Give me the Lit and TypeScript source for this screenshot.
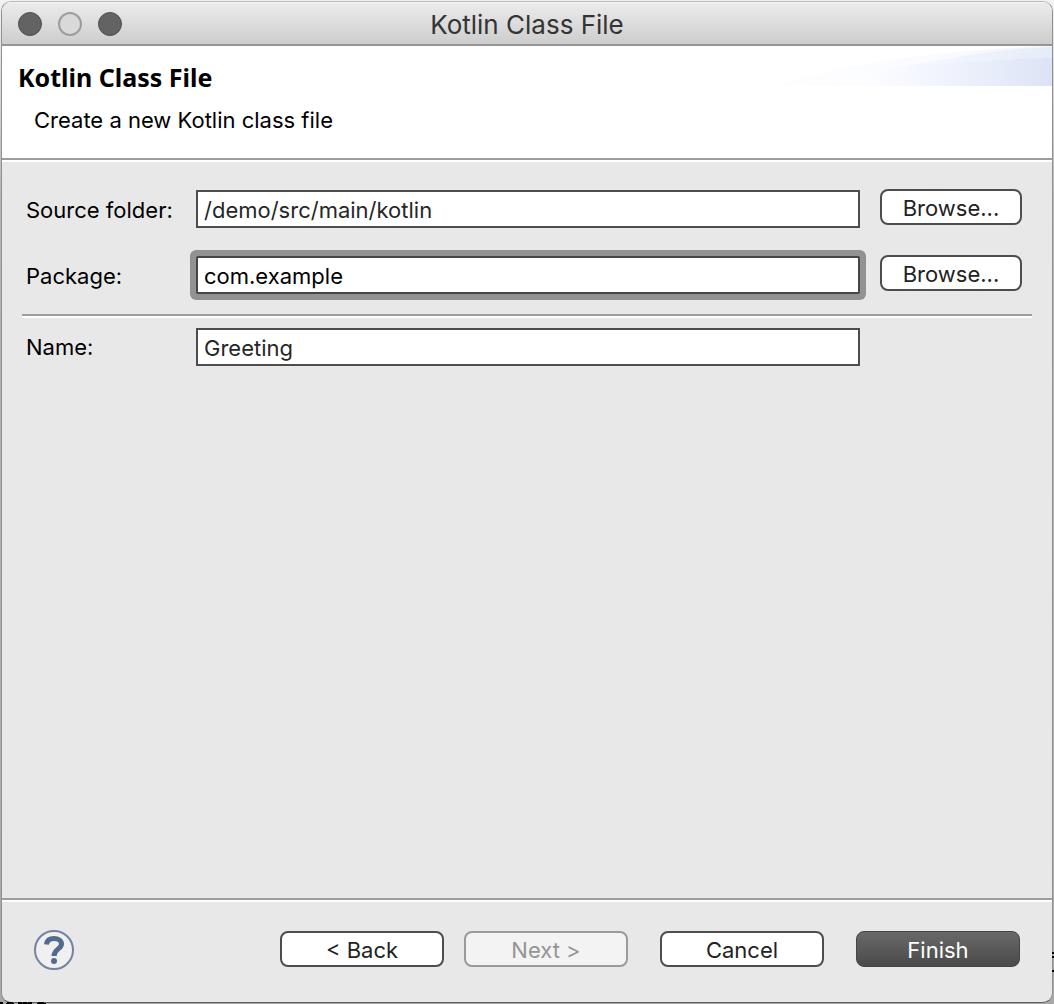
import { LitElement, html, css, svg } from "lit";
import { customElement, state } from "lit/decorators.js";

@customElement("app-root")
export class AppRoot extends LitElement {
  static styles = css`
    :host {
      display: block;
      font-family: Inter, "Liberation Sans", sans-serif;
      font-size: 22px;
      line-height: 28px;
      color: #000;
    }
    * {
      box-sizing: border-box;
    }
    .desktop {
      position: relative;
      display: flex;
      min-height: 100vh;
      padding: 1px;
      background: linear-gradient(#f2f2f2, #b4b4b4 20%, #a8a8a8);
      overflow: hidden;
    }
    .behind {
      position: absolute;
      left: 0;
      bottom: 0;
      width: 48px;
      height: 2px;
    }
    .edge {
      position: absolute;
      right: 0;
      bottom: 32px;
      width: 2px;
      height: 20px;
    }
    .window {
      position: relative;
      flex: 1;
      display: flex;
      flex-direction: column;
      border: 1px solid #919191;
      border-top-color: #b8b8b8;
      border-bottom-color: #5f5f5f;
      border-radius: 10px;
      background: #e8e8e8;
      overflow: hidden;
    }
    .titlebar {
      display: grid;
      grid-template-columns: 1fr auto 1fr;
      align-items: center;
      height: 44px;
      padding: 2px 16px 0;
      border-bottom: 2px solid #959595;
      background: linear-gradient(#ececec, #cdcdcd);
      box-shadow: inset 0 1px #f4f4f4;
    }
    .lights {
      display: flex;
      gap: 16px;
    }
    .light {
      width: 24px;
      height: 24px;
      padding: 0;
      border: 1px solid #505050;
      border-radius: 50%;
      background: #636363;
    }
    .light:disabled {
      border: 2px solid #9d9d9d;
      background: #d9d9d9;
    }
    .title {
      padding-top: 2px;
      font-size: 26px;
      color: #343434;
    }
    .banner {
      position: relative;
      height: 116px;
      padding: 15px 16px;
      background: #fff;
    }
    .rule {
      border-bottom: 2px solid #fff;
      box-shadow: inset 0 -2px #9d9d9d;
    }
    .swoosh {
      position: absolute;
      top: 0;
      right: 0;
      width: 280px;
      height: 40px;
    }
    h1 {
      margin: 0;
      font: bold 25px/32px "Noto Sans", sans-serif;
    }
    .intro {
      margin: 13px 0 0;
      padding-left: 16px;
    }
    .form {
      flex: 1;
      padding: 27px 20px;
    }
    .row {
      display: grid;
      grid-template-columns: 170px 1fr 142px;
      align-items: center;
      padding: 0 10px 0 4px;
    }
    .rows {
      display: grid;
      gap: 27px;
    }
    .rows label {
      padding-top: 2px;
    }
    .field {
      display: block;
      width: 100%;
      height: 38px;
      padding: 2px 6px 0;
      border: 2px solid #4d4d4d;
      border-radius: 0;
      outline: none;
      background: #fff;
      color: #262626;
      font: inherit;
    }
    .field.active {
      color: #000;
      border-color: #454545;
      box-shadow: 0 0 0 6px #929292;
      border-radius: 2px;
    }
    .cell {
      padding: 1px 20px 0 0;
    }
    .btn {
      height: 36px;
      padding: 2px 0 0;
      border: 2px solid #4d4d4d;
      border-radius: 8px;
      background: #fff;
      color: #222;
      font: inherit;
      line-height: 28px;
    }
    .browse {
      align-self: start;
    }
    .separator {
      height: 4px;
      margin: 20px 0 9px;
      border: 0;
      background: linear-gradient(#9d9d9d 50%, #fff 50%);
    }
    .footer {
      display: flex;
      align-items: center;
      height: 104px;
      padding: 2px 32px 4px;
      border-top: 2px solid #9d9d9d;
      box-shadow: inset 0 2px #fff;
    }
    .help {
      display: flex;
      padding: 0;
      border: 0;
      background: none;
    }
    .nav {
      display: flex;
      gap: 32px;
      margin-left: auto;
      padding-bottom: 2px;
    }
    .pair {
      display: flex;
      gap: 20px;
    }
    .nav .btn {
      width: 164px;
    }
    .btn:disabled {
      border-color: #9a9a9a;
      background: #f3f3f3;
      color: #949494;
    }
    .nav .primary {
      border: 1px solid #454545;
      background: linear-gradient(#696969, #4a4a4a);
      color: #fff;
    }
  `;

  @state() private folder = "/demo/src/main/kotlin";
  @state() private pkg = "com.example";
  @state() private name = "Greeting";

  private swoosh() {
    return svg`
      <defs>
        <linearGradient id="high" gradientUnits="userSpaceOnUse" x1="0" x2="280"><stop offset="0" stop-color="#fefeff"/><stop offset=".6" stop-color="#fafbff"/><stop offset="1" stop-color="#f0f4fd"/></linearGradient>
        <linearGradient id="mid" gradientUnits="userSpaceOnUse" x1="0" x2="280"><stop offset=".3" stop-color="#fcfdff"/><stop offset=".6" stop-color="#f3f6fe"/><stop offset="1" stop-color="#e5ebf9"/></linearGradient>
        <linearGradient id="low" gradientUnits="userSpaceOnUse" x1="0" x2="280"><stop offset=".35" stop-color="#fcfdff"/><stop offset=".6" stop-color="#f1f4fd"/><stop offset=".8" stop-color="#e7ecf9"/><stop offset="1" stop-color="#dce3f5"/></linearGradient>
      </defs>
      <path fill="url(#high)" d="M0 40C80 16 170 4 280 0V40Z"/>
      <path fill="url(#mid)" d="M90 25C150 20 200 4 280 1V40H50Z"/>
      <path fill="url(#low)" d="M90 25C150 18 210 14 280 12V40H50Z"/>`;
  }

  render() {
    return html`
      <div class="desktop">
        <main class="window">
          <header class="titlebar">
            <div class="lights">
              <button class="light" aria-label="Close"></button>
              <button class="light" aria-label="Minimize" disabled></button>
              <button class="light" aria-label="Zoom"></button>
            </div>
            <div class="title">Kotlin Class File</div>
          </header>
          <section class="banner rule">
            <svg class="swoosh" viewBox="0 0 280 40" aria-hidden="true">${this.swoosh()}</svg>
            <h1>Kotlin Class File</h1>
            <p class="intro">Create a new Kotlin class file</p>
          </section>
          <form class="form" @submit=${(e: Event) => e.preventDefault()}>
            <div class="rows">
              <div class="row">
                <label for="folder">Source folder:</label>
                <div class="cell"><input class="field" id="folder" .value=${this.folder} /></div>
                <button class="btn browse" type="button">Browse...</button>
              </div>
              <div class="row">
                <label for="pkg">Package:</label>
                <div class="cell"><input class="field active" id="pkg" .value=${this.pkg} /></div>
                <button class="btn browse" type="button">Browse...</button>
              </div>
            </div>
            <hr class="separator" />
            <div class="row">
              <label for="name">Name:</label>
              <div class="cell"><input class="field" id="name" .value=${this.name} /></div>
            </div>
          </form>
          <footer class="footer">
            <button class="help" aria-label="Help">
              <svg width="40" height="40" viewBox="0 0 40 40" fill="none" stroke="#536b8d">
                <circle cx="20" cy="20" r="19" fill="#f0f0f0" stroke="#7183a0" stroke-width="2"/>
                <path stroke-width="5" d="M12.500 14.500C13 10 16 8.500 20 8.500C24.500 8.500 27.500 10.500 27.500 14C27.500 19 20 19 20 26"/>
                <circle cx="20" cy="31" r="3" fill="#536b8d" stroke="none"/>
              </svg>
            </button>
            <div class="nav">
              <div class="pair">
                <button class="btn">&lt; Back</button>
                <button class="btn" disabled>Next &gt;</button>
              </div>
              <button class="btn">Cancel</button>
              <button class="btn primary">Finish</button>
            </div>
          </footer>
        </main>
        <svg class="behind" viewBox="0 0 48 2" aria-hidden="true">
          <path d="M0 0h3v2h-3zM7 0h6v1h1v1h-8v-1h1zM18 0h4v1h1v-1h4v1h1v-1h4v2h-14zM38 0h6v1h2v1h-9v-1h1z"/>
        </svg>
        <svg class="edge" viewBox="0 0 2 20" aria-hidden="true">
          <path d="M0 0h2v2H0zM0 4h2v2H0zM0 18h2v2H0z"/>
        </svg>
      </div>
    `;
  }
}
